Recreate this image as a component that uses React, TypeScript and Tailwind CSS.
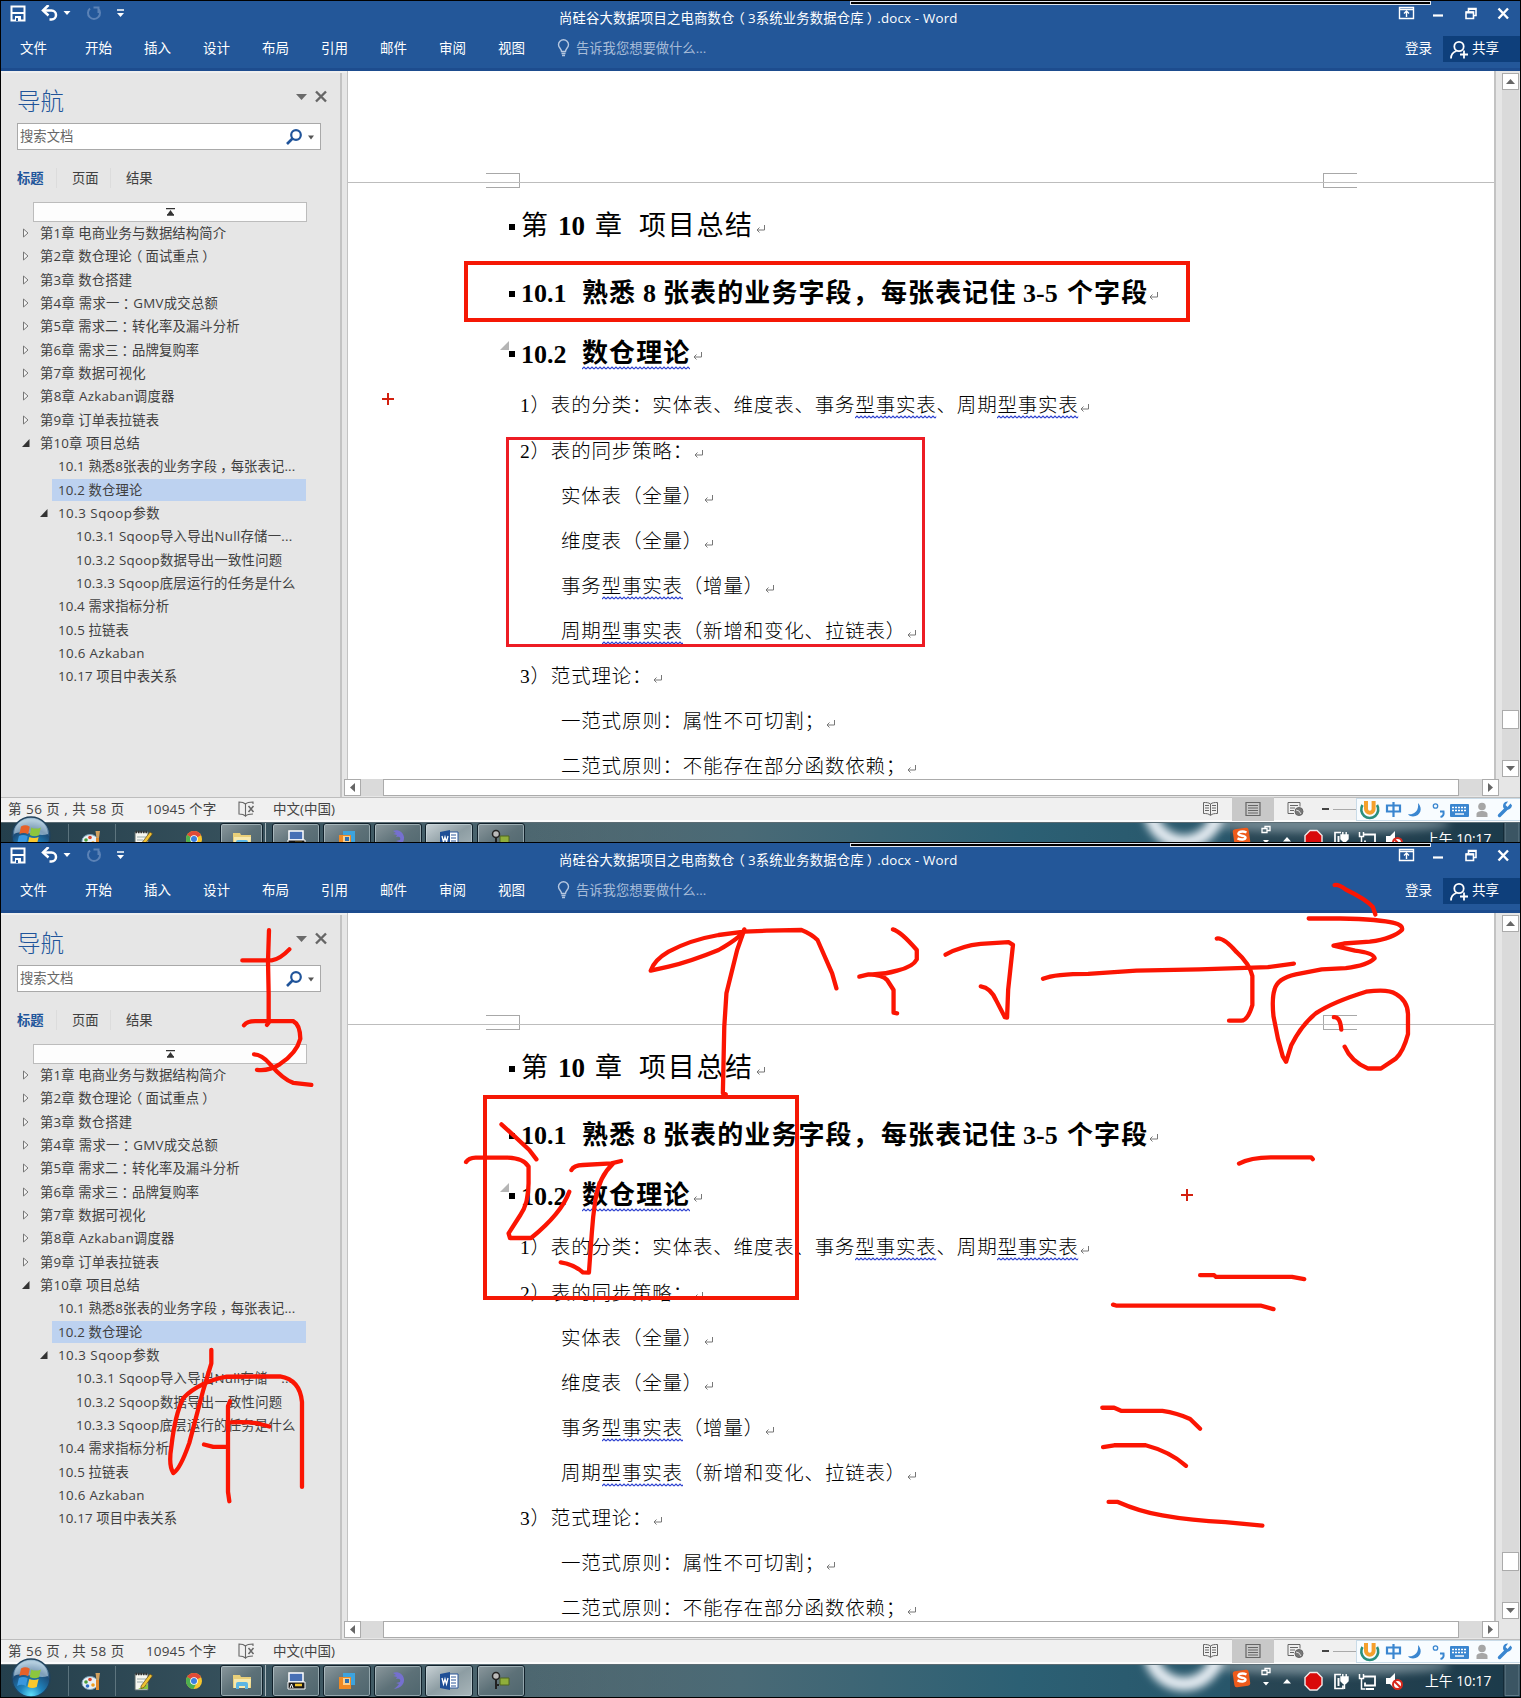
import React from "react";

const UI = "font-['Open_Sans','Noto_Sans_CJK_SC',sans-serif]";
const SERIF = "font-['Liberation_Serif','Noto_Sans_CJK_SC',serif]";

/* Full-width punctuation is set in the middle of its cell in the interface font. */
function UiText({ text }: { text: string }) {
  return (
    <>
      {text.split(/([（），：])/).map((part, i) => {
        if (part === "（") return <span key={i} className="relative -left-[3px]">{part}</span>;
        if (part === "）" || part === "，" || part === "：") return <span key={i} className="relative left-[3px]">{part}</span>;
        return part;
      })}
    </>
  );
}

/* ---------- title bar and ribbon ---------- */

function QuickAccess() {
  return (
    <svg className="ml-[9px] mt-[4px] block shrink-0" width="120" height="18" viewBox="10 5 120 18" fill="none">
      <path d="M11.500 6.500h13v14h-13z" stroke="#fff" strokeWidth="2" />
      <path d="M12 13h12" stroke="#fff" strokeWidth="2" />
      <path d="M15 16h6v4h-6z" fill="#fff" />
      <path d="M16 18h2v3h-2z" fill="#235799" />
      <path d="M44 10.500h7.500a4.500 4.500 0 0 1 0 9h-2" stroke="#fff" strokeWidth="2.500" />
      <path d="M48.500 5l-5.500 5.500 5.500 5" stroke="#fff" strokeWidth="2.500" />
      <path d="M63.500 11h7l-3.500 4z" fill="#fff" />
      <path d="M90 8.500a6 6 0 1 0 8 0M98.500 13V7.500h-5" stroke="#5b82b6" strokeWidth="2" />
      <path d="M117 10h7" stroke="#fff" strokeWidth="1.500" />
      <path d="M117 13h7l-3.500 4z" fill="#fff" />
    </svg>
  );
}

function WindowButtons() {
  return (
    <svg className="absolute left-[1395px] top-[3px]" width="120" height="18" viewBox="1396 4 120 18" fill="none" stroke="#fff">
      <path d="M1399.500 7.500h14v11h-14zM1399.500 9.500h14" strokeWidth="1.400" />
      <path d="M1406.500 17v-5.500M1404 13.500l2.500-2.500 2.500 2.500" strokeWidth="1.400" />
      <path d="M1433 15.500h10" strokeWidth="2.200" />
      <path d="M1466 12h7.500v6.500h-7.500zM1468.500 12V8.500h7.500v7h-2.500" strokeWidth="1.600" />
      <path d="M1466 12.500h7.500M1468.500 9h7.500" strokeWidth="2" />
      <path d="M1498.500 8.500l9.500 10M1508 8.500l-9.500 10" strokeWidth="2.400" />
    </svg>
  );
}

const ribbonTabs = ["开始", "插入", "设计", "布局", "引用", "邮件", "审阅", "视图"];

function Header() {
  return (
    <header className="relative h-[70px] border-b-[3px] border-[#1d4c8e] bg-[#235799] text-[13.500px] text-white">
      <div className="absolute left-[849px] top-0 h-[4px] w-[581px] border border-[#dfe6ee] bg-black" />
      <div className="flex h-[31px]">
        <QuickAccess />
        <div className="ml-[429px] w-[402px] whitespace-nowrap pt-[7px] text-[13.300px] leading-[20px] tracking-[0.200px]">
          <UiText text="尚硅谷大数据项目之电商数仓（3系统业务数据仓库）.docx - Word" />
        </div>
        <WindowButtons />
      </div>
      <div className="flex h-[32px] items-center whitespace-nowrap leading-[20px]">
        <div className="ml-[19px] w-[65px]">文件</div>
        {ribbonTabs.map((t) => (
          <div key={t} className="w-[59px]">{t}</div>
        ))}
        <svg className="block" width="13" height="18" viewBox="0 0 13 18" fill="none" stroke="#b5c7e0" strokeWidth="1.400">
          <path d="M4.500 12.500C4.500 9.500 1.500 9 1.500 5.700a5 5 0 0 1 10 0c0 3.300-3 3.800-3 6.800zM4.500 14.500h4M5 16.500h3" />
        </svg>
        <div className="ml-[6px] w-[829px] text-[13.300px] text-[#a6bbd8]">告诉我您想要做什么...</div>
        <div className="w-[38px]">登录</div>
        <div className="mt-[2px] flex h-[26px] w-[77px] items-center bg-[#0e3f7b] pb-[2px] pl-[7px]">
          <svg className="mt-[3px]" width="19" height="20" viewBox="0 0 19 20" fill="none" stroke="#fff" strokeWidth="1.800">
            <circle cx="9" cy="6.500" r="4.700" />
            <path d="M1 18.500c0-4 2.200-6.500 5.500-7.500M14 10.500v8M10 14.500h8" />
          </svg>
          <span className="ml-[3px]">共享</span>
        </div>
      </div>
    </header>
  );
}

/* ---------- navigation pane ---------- */

type NavItem = { text: string; cls: string; mark?: "closed" | "open"; active?: boolean };

const navItems: NavItem[] = [
  { text: "第1章 电商业务与数据结构简介", cls: "pl-[23px] tracking-[0.120px]", mark: "closed" },
  { text: "第2章 数仓理论（面试重点）", cls: "pl-[23px] tracking-[0.120px]", mark: "closed" },
  { text: "第3章 数仓搭建", cls: "pl-[23px] tracking-[0.150px]", mark: "closed" },
  { text: "第4章 需求一：GMV成交总额", cls: "pl-[23px] tracking-[0.280px]", mark: "closed" },
  { text: "第5章 需求二：转化率及漏斗分析", cls: "pl-[23px] tracking-[0.120px]", mark: "closed" },
  { text: "第6章 需求三：品牌复购率", cls: "pl-[23px] tracking-[0.120px]", mark: "closed" },
  { text: "第7章 数据可视化", cls: "pl-[23px] tracking-[0.150px]", mark: "closed" },
  { text: "第8章 Azkaban调度器", cls: "pl-[23px] tracking-[0.300px]", mark: "closed" },
  { text: "第9章 订单表拉链表", cls: "pl-[23px] tracking-[0.150px]", mark: "closed" },
  { text: "第10章 项目总结", cls: "pl-[23px] tracking-[0.150px]", mark: "open" },
  { text: "10.1 熟悉8张表的业务字段，每张表记...", cls: "pl-[41px] tracking-[0.120px]" },
  { text: "10.2 数仓理论", cls: "pl-[41px] tracking-[0.150px]", active: true },
  { text: "10.3 Sqoop参数", cls: "pl-[41px] tracking-[0.500px]", mark: "open" },
  { text: "10.3.1 Sqoop导入导出Null存储一...", cls: "pl-[59px] tracking-[0.280px]" },
  { text: "10.3.2 Sqoop数据导出一致性问题", cls: "pl-[59px] tracking-[0.280px]" },
  { text: "10.3.3 Sqoop底层运行的任务是什么", cls: "pl-[59px] tracking-[0.260px]" },
  { text: "10.4 需求指标分析", cls: "pl-[41px] tracking-[0.120px]" },
  { text: "10.5 拉链表", cls: "pl-[41px] tracking-[0.150px]" },
  { text: "10.6 Azkaban", cls: "pl-[41px] tracking-[0.350px]" },
  { text: "10.17 项目中表关系", cls: "pl-[41px] tracking-[0.150px]" },
];

function NavRow({ item }: { item: NavItem }) {
  return (
    <div className={"relative flex h-[23.330px] items-center " + item.cls}>
      {item.active && <div className="absolute inset-y-[0.500px] left-[35px] w-[254px] bg-[#bdd2f0]" />}
      <svg className="relative -ml-[1px] mr-[9px] block shrink-0 -translate-x-[17px]" width="8" height="10" viewBox="0 0 8 10">
        {item.mark === "closed" && <path d="M1.500 1v8l4.500-4z" fill="#f4f4f4" stroke="#777" />}
        {item.mark === "open" && <path d="M7.500 1v8H0z" fill="#333" />}
      </svg>
      <span className="relative -ml-[16px] whitespace-nowrap"><UiText text={item.text} /></span>
    </div>
  );
}

function NavPane() {
  return (
    <aside className="h-[726px] w-[346px] shrink-0 border-t-2 border-[#efefef] bg-[#e6e6e6] text-[13.330px] leading-[20px] text-[#404040]">
      <div className="flex h-full w-[341px] flex-col border-r-2 border-[#c3c3c3] pl-[16px]">
        <div className="flex h-[50px] items-start justify-between pr-[11px]">
          <div className="pt-[12px] text-[23.500px] font-light leading-[32px] text-[#20549a]">导航</div>
          <svg className="mt-[15px]" width="34" height="18" viewBox="0 0 34 18">
            <path d="M1 6h11l-5.500 6z" fill="#6a6a6a" />
            <path d="M21 3.500l10 10M31 3.500l-10 10" stroke="#666" strokeWidth="2.400" />
          </svg>
        </div>
        <div className="flex h-[27px] w-[304px] shrink-0 items-center border border-[#a9a9a9] bg-white pb-[2px] pl-[2px] text-[#666]">
          <span className="w-[264px]">搜索文档</span>
          <svg className="mt-[2px]" width="36" height="20" viewBox="0 0 36 20" fill="none">
            <circle cx="12" cy="8" r="4.800" stroke="#20549a" strokeWidth="2.200" />
            <path d="M8.500 11.500l-5.500 5.500" stroke="#20549a" strokeWidth="2.600" />
            <path d="M24 8.500h6l-3 4z" fill="#555" />
          </svg>
        </div>
        <div className="mt-[17px] flex h-[21px] shrink-0 items-center">
          <div className="w-[40px] border-r border-[#dcdcdc] font-bold text-[#20549a]">标题</div>
          <div className="w-[54px] border-r border-[#dcdcdc] pl-[15px]">页面</div>
          <div className="pl-[15px]">结果</div>
        </div>
        <div className="ml-[16px] mt-[14px] flex h-[20px] w-[274px] shrink-0 items-center justify-center border border-[#bcbcbc] bg-[#fdfdfd]">
          <svg width="9" height="8" viewBox="0 0 9 8">
            <path d="M0 .7h9M1 7h7" stroke="#333" strokeWidth="1.300" />
            <path d="M4.500 2l3.500 5H1z" fill="#333" />
          </svg>
        </div>
        <div className="-mt-[0.500px]">
          {navItems.map((i) => (
            <NavRow key={i.text} item={i} />
          ))}
        </div>
      </div>
    </aside>
  );
}

/* ---------- document ---------- */

function Ret() {
  return (
    <svg className="mt-[5px] block shrink-0" width="11" height="9" viewBox="0 0 11 9" fill="none" stroke="#777" strokeWidth="1">
      <path d="M9.500 0v5H2M4.500 2.500L2 5l2.500 2.500" />
    </svg>
  );
}

function Wavy({ children }: { children: React.ReactNode }) {
  return (
    <span className="relative inline-block">
      {children}
      <svg className="absolute bottom-[-1px] left-0 h-[4px] w-full" preserveAspectRatio="none">
        <defs>
          <pattern id="squiggle" width="4" height="4" patternUnits="userSpaceOnUse">
            <path d="M0 3l2-2 2 2" fill="none" stroke="#2a3fd0" strokeWidth="1.100" />
          </pattern>
        </defs>
        <rect width="100%" height="4" fill="url(#squiggle)" />
      </svg>
    </span>
  );
}

function Bullet() {
  return <span className="mr-[6px] block size-[6px] shrink-0 bg-black" />;
}

function Line({ indent, children }: { indent?: boolean; children: React.ReactNode }) {
  return (
    <div className={"flex h-[45.100px] items-center whitespace-nowrap leading-[24px] " + (indent ? "pl-[213px]" : "pl-[172px]")}>
      {children}
      <Ret />
    </div>
  );
}

function Doc() {
  return (
    <main className={"h-[708px] w-[1149px] shrink-0 overflow-hidden border-l border-r-2 border-[#c3c3c3] bg-white text-black " + SERIF}>
      <div className="relative mt-[102px] flex h-[15px] justify-between pl-[138px] pr-[137px]">
        <div className="w-[34px] border-y border-r border-[#a8a8a8]" />
        <div className="w-[34px] border-y border-l border-[#a8a8a8]" />
        <div className="absolute inset-x-0 top-[9px] h-[1px] bg-[#bdbdbd]" />
      </div>

      <div className="mt-[18.700px] flex h-[40px] items-center whitespace-nowrap pl-[161px] text-[27px]">
        <Bullet />
        <span className="w-[37px]">第</span>
        <span className="w-[37px] font-bold">10</span>
        <span className="w-[44px]">章</span>
        <span className="w-[116px] tracking-[1.700px]">项目总结</span>
        <Ret />
      </div>

      <div className="mt-[27.200px] flex h-[40px] items-center whitespace-nowrap pl-[161px] text-[26px] font-bold">
        <Bullet />
        <span className="w-[61px]">10.1</span>
        <span className="w-[61px] tracking-[1px]">熟悉</span>
        <span className="w-[20px]">8</span>
        <span className="w-[218px] tracking-[1.100px]">张表的业务字段，</span>
        <span className="w-[142px] tracking-[1.100px]">每张表记住</span>
        <span className="w-[44px]">3-5</span>
        <span className="w-[81px] tracking-[1.100px]">个字段</span>
        <Ret />
      </div>

      <div className="mt-[20.500px] flex h-[40px] items-center whitespace-nowrap pl-[161px] text-[26px] font-bold">
        <span className="relative">
          <svg className="absolute -left-[9px] -top-[10px]" width="9" height="9" viewBox="0 0 9 9">
            <path d="M9 0v9H0z" fill="#b5b5b5" />
          </svg>
          <Bullet />
        </span>
        <span className="w-[61px]">10.2</span>
        <span className="w-[110px] leading-[30px] tracking-[1.100px]"><Wavy>数仓理论</Wavy></span>
        <Ret />
      </div>

      <div className="mt-[9.500px] text-[19.500px] font-light tracking-[0.800px]">
        <Line>1）表的分类：实体表、维度表、事务<Wavy>型事实表</Wavy>、周期<Wavy>型事实表</Wavy></Line>
        <Line>2）表的同步策略：</Line>
        <Line indent>实体表（全量）</Line>
        <Line indent>维度表（全量）</Line>
        <Line indent>事务<Wavy>型事实表</Wavy>（增量）</Line>
        <Line indent>周期<Wavy>型事实表</Wavy>（新增和变化、拉链表）</Line>
        <Line>3）范式理论：</Line>
        <Line indent>一范式原则：属性不可切割；</Line>
        <Line indent>二范式原则：不能存在部分函数依赖；</Line>
      </div>
    </main>
  );
}

function ScrollButton({ d }: { d: string }) {
  return (
    <div className="flex size-[17px] shrink-0 items-center justify-center border border-[#ababab] bg-white">
      <svg width="9" height="9" viewBox="0 0 9 9"><path d={d} fill="#666" /></svg>
    </div>
  );
}

function HScroll() {
  return (
    <div className="flex h-[18px] w-[1178px] items-start bg-[#e6e6e6]">
      <div className="-ml-[3px]"><ScrollButton d="M7 0v9L2 4.500z" /></div>
      <div className="flex h-[17px] flex-1 bg-[#dadada]">
        <div className="ml-[22px] w-[1076px] border border-[#ababab] bg-white" />
      </div>
      <div className="mr-[26px]"><ScrollButton d="M2 0v9l5-4.500z" /></div>
    </div>
  );
}

/* ---------- status bar ---------- */

function StatusBar() {
  return (
    <div className="relative flex h-[25px] items-center whitespace-nowrap border-b-2 border-t border-b-[#fbfbfb] border-t-[#bdbdbd] bg-[#f0f0f0] pb-[1px] pl-[7px] text-[13.500px] leading-[20px] text-[#444]">
      <div className="w-[138px] tracking-[0.480px]">第 56 页 , 共 58 页</div>
      <div className="w-[92px] tracking-[0.150px]">10945 个字</div>
      <svg width="17" height="16" viewBox="0 0 17 16" fill="none" stroke="#666" strokeWidth="1.100">
        <path d="M7.500 3C6 1.500 4 1 1 1v12c3 0 5 .5 6.500 2zM7.500 3C9 1.500 11 1 15 1v2M7.500 15c1.500-1.500 3-2 7.500-2" />
        <path d="M10.500 5l5 6M15.500 5l-5 6" strokeWidth="1.500" />
      </svg>
      <div className="ml-[18px]">中文(中国)</div>
      <svg className="absolute left-[1194px] top-[-1px]" width="165" height="24" viewBox="1195 797 165 24" fill="none" stroke="#666">
        <path d="M1232 797h42v24h-42z" fill="#c8c8c8" stroke="none" />
        <path d="M1210.500 804c-2-1.500-4-1.500-7-1.500v11c3 0 5 0 7 2 2-2 4-2 7-2v-11c-3 0-5 0-7 1.500zv11M1205 805.500h4M1205 808h4M1205 810.500h4M1212 805.500h4M1212 808h4M1212 810.500h4" />
        <path d="M1246 802.500h14v13h-14zM1248 805.500h10M1248 808h10M1248 810.500h10M1248 813h10" strokeWidth="1.200" />
        <path d="M1294 813.500h-6v-11h12v4M1290 805.500h8M1290 808h5M1290 810.500h4" />
        <circle cx="1299" cy="811.500" r="4" fill="#777" />
        <path d="M1296 810l3 1 2 3" stroke="#ddd" />
        <path d="M1322 809h7" stroke="#444" strokeWidth="2" />
        <path d="M1333 809.500h24" stroke="#aaa" />
      </svg>
      <ImeBar />
    </div>
  );
}

function ImeBar() {
  return (
    <div className="absolute left-[1355px] top-[0px] flex h-[23px] w-[165px] items-center border border-[#c9dbe8] bg-[#f8fcff]">
      <svg className="block" width="163" height="22" viewBox="1356 799 163 22" fill="none">
        <path d="M1361.500 805a8.500 8.500 0 1 0 14.500 0" stroke="#2a8f7d" strokeWidth="2.600" />
        <path d="M1365 801v8a3.800 3.800 0 0 0 7.600 0v-8" stroke="#f5a02c" strokeWidth="4" />
        <path d="M1386 805.500h13v6h-13zM1392.500 802v15" stroke="#3a86d0" strokeWidth="2.200" />
        <path d="M1417 803c5 5 3 13-5 13.500-2 0-4-.8-5-2.200 7 .5 11-4 10-11.300z" fill="#3a86d0" />
        <circle cx="1434.500" cy="806" r="2.200" stroke="#3a86d0" strokeWidth="1.300" />
        <path d="M1439 811.500h3.500c.5 3-.5 5-3 5.500" stroke="#3a86d0" strokeWidth="2" />
        <rect x="1449" y="804" width="19" height="13" rx="1" fill="#3a86d0" />
        <path d="M1451 807.500h15M1451 810.500h15" stroke="#fff" strokeWidth="1.400" strokeDasharray="2 1" />
        <path d="M1454 814h9" stroke="#fff" strokeWidth="1.400" />
        <circle cx="1481" cy="806.500" r="3.800" fill="#a6a6a6" />
        <path d="M1475.500 817v-3c0-4 11-4 11 0v3z" fill="#a6a6a6" />
        <path d="M1498.500 815.500l7-7" stroke="#3a86d0" strokeWidth="3.400" strokeLinecap="round" />
        <path d="M1509.500 803.500l-3 3.500-2-2 2.500-3.500c-3.500-.5-6 3-4.500 6.500 3 3.500 8 1.500 8.500-2.500z" fill="#3a86d0" />
      </svg>
    </div>
  );
}

/* ---------- Windows taskbar ---------- */

function TaskButton({ cls, active, children }: { cls: string; active?: boolean; children: React.ReactNode }) {
  return (
    <div
      className={
        "flex h-[32px] items-center justify-center rounded-[3px] border border-[#10202a] bg-linear-to-br shadow-[inset_0_0_0_1px_rgba(210,225,230,0.5)] " +
        (active ? "from-[#c9d2d6] via-[#8d9da3] to-[#a9b6ba] " : "from-[#8b989d] via-[#5d7178] to-[#4f666e] ") +
        cls
      }
    >
      {children}
    </div>
  );
}

function StartOrb({ uid }: { uid: string }) {
  return (
    <svg className="absolute left-[10px] top-[-6px] z-10" width="40" height="40" viewBox="0 0 42 42">
      <defs>
        <radialGradient id={"orb" + uid} cx="50%" cy="95%" r="85%">
          <stop offset="0" stopColor="#5fe0fb" />
          <stop offset=".35" stopColor="#1f83bd" />
          <stop offset=".75" stopColor="#1c4c78" />
          <stop offset="1" stopColor="#8fb1c8" />
        </radialGradient>
      </defs>
      <circle cx="21" cy="21" r="20" fill={"url(#orb" + uid + ")"} stroke="#20425c" strokeWidth="1.500" />
      <path d="M3 19C4 8 12 2.500 21 2.500S38 8 39 19c-10 4-26-5-36 0z" fill="#cfe2ee" opacity=".55" />
      <path d="M10.500 11c3-1.600 6-1.600 9.200.2l-1.700 8c-3-1.600-6-1.800-9.200-.2z" fill="#e6612a" />
      <path d="M21.300 12c3 1.600 6.500 1.700 10 0l-1.900 8.200c-3.500 1.500-6.500 1.200-9.700-.3z" fill="#8cc63e" />
      <path d="M8.300 21c3-1.600 6-1.500 9.200.2l-1.900 8.300c-3-1.700-6-1.700-9.200-.2z" fill="#3a97de" />
      <path d="M19.200 22c3.200 1.500 6.500 1.600 9.800.1l-2 8.400c-3.300 1.500-6.500 1.300-9.600-.3z" fill="#fbc82e" />
    </svg>
  );
}

function Taskbar({ uid }: { uid: string }) {
  return (
    <div className="relative h-[34px] bg-linear-to-r from-[#243f4c] via-[#4d6770] via-35% to-[#1b3a4a]">
      <svg className="absolute inset-0" width="1519" height="34" viewBox="1 822 1519 34">
        <defs>
          <filter id={"blur" + uid} x="-50%" y="-50%" width="200%" height="200%"><feGaussianBlur stdDeviation="4" /></filter>
          <linearGradient id={"sky" + uid} x1="0" x2="1">
            <stop offset="0" stopColor="#5c747c" stopOpacity="0" />
            <stop offset=".3" stopColor="#4a6a76" />
            <stop offset=".7" stopColor="#2c6074" />
            <stop offset="1" stopColor="#28566a" />
          </linearGradient>
        </defs>
        <rect x="530" y="822" width="700" height="34" fill={"url(#sky" + uid + ")"} />
        <ellipse cx="1330" cy="824" rx="120" ry="9" fill="#90a3ab" opacity=".7" filter={"url(#blur" + uid + ")"} />
        <circle cx="1184" cy="808" r="34" fill="none" stroke="#e6edf3" strokeWidth="14" filter={"url(#blur" + uid + ")"} />
        <path d="M68.500 824v30M115.500 824v30" stroke="#7d939b" opacity=".6" />
        <path d="M1504 822v33" stroke="#0c1c26" />
        <rect x="1505" y="822.500" width="14" height="31" fill="#3b5563" stroke="#718894" strokeWidth=".8" />
        <path d="M1 822.500h1519" stroke="#5b6c74" />
      </svg>
      <StartOrb uid={uid} />
      <div className="relative flex h-[33px] items-center">
        <svg className="ml-[80px] block shrink-0" width="22" height="22" viewBox="0 0 22 22">
          <ellipse cx="9" cy="13" rx="8" ry="6.500" fill="#e8f1f6" stroke="#7fa3bb" />
          <circle cx="5" cy="12" r="1.800" fill="#4b9d3c" /><circle cx="9" cy="9.500" r="1.800" fill="#d9442c" />
          <circle cx="6.500" cy="16" r="1.800" fill="#2c6dc9" /><circle cx="12" cy="15" r="1.800" fill="#ef9d20" />
          <path d="M16.500 10v10" stroke="#e08a2f" strokeWidth="3" /><path d="M14.500 3h4.500l-1 7h-2.500z" fill="#d1a05e" />
        </svg>
        <svg className="ml-[29px] block shrink-0" width="22" height="22" viewBox="0 0 22 22">
          <path d="M3 4h13v16H3z" fill="#f7f7f0" stroke="#5a6a6a" /><path d="M3.500 4h12" stroke="#333" strokeWidth="2.500" strokeDasharray="1.500 1" />
          <path d="M5 9h9M5 12h6" stroke="#9aa" /><path d="M6 19h10v-5z" fill="#8dc63f" />
          <path d="M9 16l9-12 2.500 1.800L12 17.500l-3 1z" fill="#f1c232" stroke="#59441a" strokeWidth=".7" />
        </svg>
        <svg className="ml-[31px] block shrink-0" width="18" height="18" viewBox="0 0 18 18">
          <circle cx="9" cy="9" r="8" fill="#f7c52c" />
          <path d="M9 9L2.100 5A8 8 0 0 1 16 5.200z" fill="#e04a38" />
          <path d="M9 9L2.100 5A8 8 0 0 0 8.500 17L12 10z" fill="#4caf50" />
          <circle cx="9" cy="9" r="3.800" fill="#fff" /><circle cx="9" cy="9" r="3" fill="#3c7fe0" />
        </svg>
        <TaskButton cls="ml-[17px] w-[43px]">
          <svg width="20" height="18" viewBox="0 0 20 18">
            <path d="M1 3h7l1 2h10v11H1z" fill="#e9cf79" /><path d="M2 7h17l-1 9H2z" fill="#f7e9ae" />
            <path d="M4 17v-5a2 2 0 0 1 2-2h8a2 2 0 0 1 2 2v5h-3v-3H7v3z" fill="#5cb6e4" />
          </svg>
        </TaskButton>
        <div className="h-[31px] w-[3px] border-r border-[#a8b5ba]" />
        <TaskButton cls="ml-[6px] w-[48px]">
          <svg width="20" height="20" viewBox="0 0 20 20">
            <path d="M3 2h14v9H3z" fill="#4770b5" stroke="#fff" strokeWidth="1.500" />
            <path d="M2 11h17v7H2z" fill="#181818" stroke="#fff" /><path d="M9 14h7" stroke="#f2c22c" strokeWidth="2.500" />
            <path d="M4 17l1.500-4L7 17" stroke="#fff" fill="none" />
          </svg>
        </TaskButton>
        <TaskButton cls="ml-[3px] w-[48px]">
          <svg width="18" height="18" viewBox="0 0 18 18">
            <path d="M5 1h12v12H5z" fill="#3da3dd" /><path d="M1 5h12v12H1z" fill="#f08a24" />
            <path d="M5 6h7v7H5z" fill="#fbd08d" /><path d="M7 7h4v4H7z" fill="#2d6fb0" />
          </svg>
        </TaskButton>
        <TaskButton cls="ml-[3px] w-[48px]">
          <svg width="18" height="20" viewBox="0 0 18 20">
            <path d="M4 2c4-2 10 0 11 6 .6 5-3 9-10 10 2-2 4-3 5-5l-3-1 4-1c1-3-1-4-4-3l1-2-4-1 3-1z" fill="#7570cf" />
          </svg>
        </TaskButton>
        <TaskButton active cls="ml-[3px] w-[48px]">
          <svg width="20" height="20" viewBox="0 0 20 20">
            <path d="M9 3h10v14H9z" fill="#fff" stroke="#2b579a" /><path d="M12 6h5M12 9h5M12 12h5M12 15h5" stroke="#2b579a" />
            <path d="M1 3l10-2v18L1 17z" fill="#1f4f96" /><path d="M3 7l1.500 6L6 8l1.500 5L9 7" stroke="#fff" strokeWidth="1.300" fill="none" />
          </svg>
        </TaskButton>
        <TaskButton cls="ml-[4px] w-[48px]">
          <svg width="20" height="20" viewBox="0 0 20 20">
            <path d="M9 7h9v7H9z" fill="#8fae3b" stroke="#4e6420" /><circle cx="5" cy="5" r="3.500" fill="#bbb" stroke="#222" strokeWidth="1.500" />
            <path d="M5 8v10M5 14h3" stroke="#222" strokeWidth="2" />
          </svg>
        </TaskButton>
      </div>
      <svg className="absolute left-[1229px] top-0" width="180" height="33" viewBox="1230 822 180 33" fill="none">
        <rect x="1233.500" y="828.500" width="16" height="16" rx="2.500" fill="#ee5a1b" transform="rotate(-8 1241.500 836.500)" />
        <path d="M1246.500 832.500c-4-2-9-.5-8 1.800 1 2 7 .8 7 3.300 0 2.200-4.500 2.500-8 .8" stroke="#fff" strokeWidth="2.400" />
        <path d="M1262 828.500h5v4h-5zM1265 828v-1.500h5v4h-2.500" stroke="#fff" strokeWidth="1.300" />
        <path d="M1263 840h6l-3 3.500zM1283 841.500h8l-4-4.500z" fill="#fff" />
        <path d="M1310 830.500h7l5 5v7.500l-5 5h-7l-5-5v-7.500z" fill="#d90a0a" stroke="#f3eaea" strokeWidth="1.400" />
        <path d="M1341 832.500h-6v14h8v-3" stroke="#fff" strokeWidth="1.700" /><path d="M1338.500 836v8" stroke="#fff" strokeWidth="2" />
        <path d="M1341 835h7v4l-2.500 2.500h-2L1341 839zM1344.500 841v6M1342.800 835v-3M1346.200 835v-3" fill="#fff" stroke="#fff" strokeWidth="1.400" />
        <path d="M1364 834.500h11v9h-10v-3M1366 847h8" stroke="#fff" strokeWidth="1.800" />
        <path d="M1359.500 832v4.500h4V832M1361.500 836v11h4" stroke="#fff" strokeWidth="1.500" />
        <path d="M1386 836h4l5-5v16l-5-5h-4z" fill="#fff" /><circle cx="1397.500" cy="842.500" r="4.500" fill="#fff" stroke="#d8281c" strokeWidth="2" />
        <path d="M1394.500 839.500l6 6" stroke="#d8281c" strokeWidth="2" />
      </svg>
      <div className="absolute left-[1424px] top-[7px] whitespace-nowrap text-[13.800px] leading-[20px] text-white">上午 10:17</div>
    </div>
  );
}

/* ---------- one recorded desktop ---------- */

function Desktop({ uid, size }: { uid: string; size: string }) {
  return (
    <section className={"overflow-hidden border-x border-t border-black " + size}>
      <Header />
      <div className="flex h-[726px] bg-[#e6e6e6]">
        <NavPane />
        <div className="shrink-0">
          <Doc />
          <HScroll />
        </div>
        <div className="-ml-[23px] mt-[2px] flex h-[704px] w-[17px] shrink-0 flex-col bg-[#dadada]">
          <ScrollButton d="M0 7h9L4.500 2z" />
          <div className="mt-auto h-[19px] border border-[#ababab] bg-white" />
          <div className="mt-[31px]"><ScrollButton d="M0 2h9L4.500 7z" /></div>
        </div>
      </div>
      <StatusBar />
      <Taskbar uid={uid} />
    </section>
  );
}

/* ---------- pen marks drawn over the desktops ---------- */

function Cross({ cls }: { cls: string }) {
  return (
    <svg className={"absolute " + cls} width="12" height="12" viewBox="0 0 12 12">
      <path d="M6 0v12M0 6h12" stroke="#d3200f" strokeWidth="2" />
    </svg>
  );
}

function Ink({ place, d }: { place: string; d: string[] }) {
  return (
    <g transform={place}>
      {d.map((p) => (
        <path key={p} d={p} vectorEffect="non-scaling-stroke" />
      ))}
    </g>
  );
}

function Handwriting() {
  return (
    <svg
      className="pointer-events-none absolute left-0 top-0"
      width="1521"
      height="856"
      viewBox="0 842 1521 856"
      fill="none"
      stroke="#fb1503"
      strokeWidth="4.300"
      strokeLinecap="round"
      strokeLinejoin="round"
    >
      <Ink
        place="translate(440 900) scale(0.35714 0.33333)"
        d={[
          "M852 88Q846 110 780 150Q700 185 640 200L590 212Q600 180 640 155Q700 120 780 105L852 95L915 92L1012 90Q1040 102 1057 120L1098 220L1110 265",
          "M850 95L832 150L802 280L796 380L792 580L800 583",
          "M1268 88Q1290 94 1335 150V178Q1325 200 1280 212Q1240 225 1200 223L1174 230M1200 223Q1240 225 1252 240L1270 270V338L1280 340",
          "M172 673L200 700L250 750L270 778",
          "M73 786Q80 774 100 773H190Q235 775 248 800V850Q248 910 225 945L192 1000L196 1014H255Q340 940 362 875",
          "M368 810Q375 796 400 795L480 790L507 783M485 790Q445 830 435 900Q428 950 425 1000L417 1118L400 1117Q375 1093 338 1087",
        ]}
      />
      <Ink
        place="translate(940 860) scale(0.37054 0.44643)"
        d={[
          "M15 212Q60 192 110 188L185 184L197 190L184 290L181 353L175 352L152 315Q137 286 110 283",
          "M278 266Q310 255 400 255L530 248L700 245L885 240L955 232",
          "M747 176Q765 173 800 206Q835 232 843 260V325Q830 360 813 360H780",
          "M1065 56Q1075 54 1095 66Q1150 88 1168 105L1175 122",
          "M995 131H1080Q1190 133 1225 141Q1250 146 1247 156Q1225 175 1160 183L1090 187L1062 192L1120 203Q1170 208 1173 220Q1155 236 1095 242L1030 245L960 256Q910 265 903 290Q895 310 900 350L912 400L925 440L934 452L948 415Q975 370 1015 343Q1060 318 1150 295Q1210 288 1230 300Q1262 315 1263 345V390Q1250 430 1230 445L1190 467H1155Q1110 452 1092 418",
          "M1063 352Q1080 350 1083 380",
          "M807 680Q840 665 900 666H1002L1006 670",
          "M702 930H740L745 934H950L983 939",
          "M467 996L475 998H865L900 1006",
          "M438 1227H470L490 1234H600Q640 1239 675 1252L702 1274",
          "M440 1315L470 1311H555Q620 1325 664 1357",
          "M455 1438H480Q540 1460 600 1468Q680 1480 770 1483L870 1491",
        ]}
      />
      <Ink
        place="translate(0 900) scale(0.33333 0.40816)"
        d={[
          "M807 74L804 150L806 230V300L801 306M727 148H815Q840 145 868 121",
          "M732 307Q742 296 770 297H880Q900 305 901 340Q890 375 840 402Q805 420 771 416M762 378Q785 378 810 402Q850 440 880 448L934 453",
          "M634 1102V1135L610 1200L568 1330Q540 1395 520 1404Q505 1385 514 1340Q525 1260 550 1220Q600 1180 680 1168L840 1167Q900 1175 906 1230V1438",
          "M690 1228L684 1240V1450L688 1473M612 1334L640 1340H680M695 1280Q740 1278 772 1282L808 1290",
        ]}
      />
    </svg>
  );
}

export default function App() {
  return (
    <div className={"w-[1521px] overflow-hidden bg-black " + UI}>
      <div className="relative">
        <Desktop uid="a" size="h-[842px]" />
        <div className="absolute left-[464px] top-[261px] h-[61px] w-[726px] border-[4px] border-[#f51805]" />
        <div className="absolute left-[506px] top-[437px] h-[210px] w-[419px] border-[3px] border-[#ed1c24]" />
        <Cross cls="left-[382px] top-[393px]" />
      </div>
      <div className="relative">
        <Desktop uid="b" size="h-[856px] border-b" />
        <div className="absolute left-[483px] top-[253px] h-[205px] w-[316px] border-[4px] border-[#f51805]" />
        <Cross cls="left-[1181px] top-[347px]" />
        <Handwriting />
      </div>
    </div>
  );
}
